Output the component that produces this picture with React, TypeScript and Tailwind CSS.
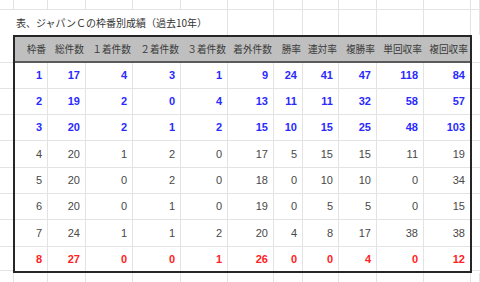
import React from "react";

type Tone = "blue" | "gray" | "red";

interface RowData {
  values: number[];
  tone: Tone;
}

const headers = [
  "枠番",
  "総件数",
  "１着件数",
  "２着件数",
  "３着件数",
  "着外件数",
  "勝率",
  "連対率",
  "複勝率",
  "単回収率",
  "複回収率",
];

const rows: RowData[] = [
  { values: [1, 17, 4, 3, 1, 9, 24, 41, 47, 118, 84], tone: "blue" },
  { values: [2, 19, 2, 0, 4, 13, 11, 11, 32, 58, 57], tone: "blue" },
  { values: [3, 20, 2, 1, 2, 15, 10, 15, 25, 48, 103], tone: "blue" },
  { values: [4, 20, 1, 2, 0, 17, 5, 15, 15, 11, 19], tone: "gray" },
  { values: [5, 20, 0, 2, 0, 18, 0, 10, 10, 0, 34], tone: "gray" },
  { values: [6, 20, 0, 1, 0, 19, 0, 5, 5, 0, 15], tone: "gray" },
  { values: [7, 24, 1, 1, 2, 20, 4, 8, 17, 38, 38], tone: "gray" },
  { values: [8, 27, 0, 0, 1, 26, 0, 0, 4, 0, 12], tone: "red" },
];

// row heights follow the sheet's uneven row lines
const rowHeights = [
  "h-[26px]",
  "h-[26px]",
  "h-[26px]",
  "h-[27px]",
  "h-[26px]",
  "h-[26px]",
  "h-[27px]",
  "h-[24px]",
];

const toneClass: Record<Tone, string> = {
  blue: "text-[#2a2aff] font-bold",
  gray: "text-[#484848]",
  red: "text-[#ff2222] font-bold",
};

const sheetCols =
  "grid grid-cols-[14px_34px_38px_47px_48px_47px_46px_29px_36px_38px_47px_47px_9px]";
const tableCols =
  "grid grid-cols-[33px_38px_47px_48px_47px_46px_29px_36px_38px_47px_46px]";

const GridStrip: React.FC<{ height: string; bottom?: boolean }> = ({
  height,
  bottom,
}) => (
  <div className={`${sheetCols} ${height} ${bottom ? "border-b border-[#e3e3e3]" : ""}`}>
    {Array.from({ length: 13 }).map((_, i) => (
      <div key={i} className="border-r border-[#e3e3e3]" />
    ))}
  </div>
);

const SideStrip: React.FC<{ width: string }> = ({ width }) => (
  <div className={`${width} flex flex-col`}>
    <div className="h-[28px] border-b border-[#e3e3e3]" />
    {rowHeights.map((h, i) => (
      <div key={i} className={`${h} border-b border-[#e3e3e3]`} />
    ))}
  </div>
);

export default function App() {
  return (
    <div className="w-[480px] h-[282px] overflow-hidden bg-white font-['Noto_Sans_CJK_JP',sans-serif]">
      <GridStrip height="h-[10px]" bottom />

      {/* title row: text runs over the first cells */}
      <div className="flex h-[25px]">
        <div className="w-[228px] border-r border-[#e3e3e3] flex items-center pl-[16px] text-[10px] text-[#333333] whitespace-nowrap">
          表、ジャパンＣの枠番別成績（過去10年）
        </div>
        <div className="w-[46px] border-r border-[#e3e3e3]" />
        <div className="w-[29px] border-r border-[#e3e3e3]" />
        <div className="w-[36px] border-r border-[#e3e3e3]" />
        <div className="w-[38px] border-r border-[#e3e3e3]" />
        <div className="w-[47px] border-r border-[#e3e3e3]" />
        <div className="w-[47px] border-r border-[#e3e3e3]" />
        <div className="w-[9px] border-r border-[#e3e3e3]" />
      </div>

      <div className="flex">
        <SideStrip width="w-[13px]" />

        <div className="w-[459px] border-2 border-[#262626]">
          <div
            className={`${tableCols} h-[26px] bg-[#bfbfbf] border-b-2 border-[#5a5a5a]`}
          >
            {headers.map((h) => (
              <div
                key={h}
                className="flex items-center justify-end pr-[2px] text-[9.7px] text-[#3a3a3a] whitespace-nowrap"
              >
                {h}
              </div>
            ))}
          </div>

          {rows.map((row, r) => (
            <div
              key={r}
              className={`${tableCols} ${rowHeights[r]} ${
                r < rows.length - 1 ? "border-b border-[#e3e3e3]" : ""
              }`}
            >
              {row.values.map((v, c) => (
                <div
                  key={c}
                  className={`flex items-center justify-end pr-[5px] font-['Liberation_Sans',sans-serif] text-[11px] ${
                    toneClass[row.tone]
                  } ${c < row.values.length - 1 ? "border-r border-[#e3e3e3]" : ""}`}
                >
                  {v}
                </div>
              ))}
            </div>
          ))}
        </div>

        <SideStrip width="w-[8px]" />
      </div>

      <GridStrip height="h-[12px]" />
    </div>
  );
}
